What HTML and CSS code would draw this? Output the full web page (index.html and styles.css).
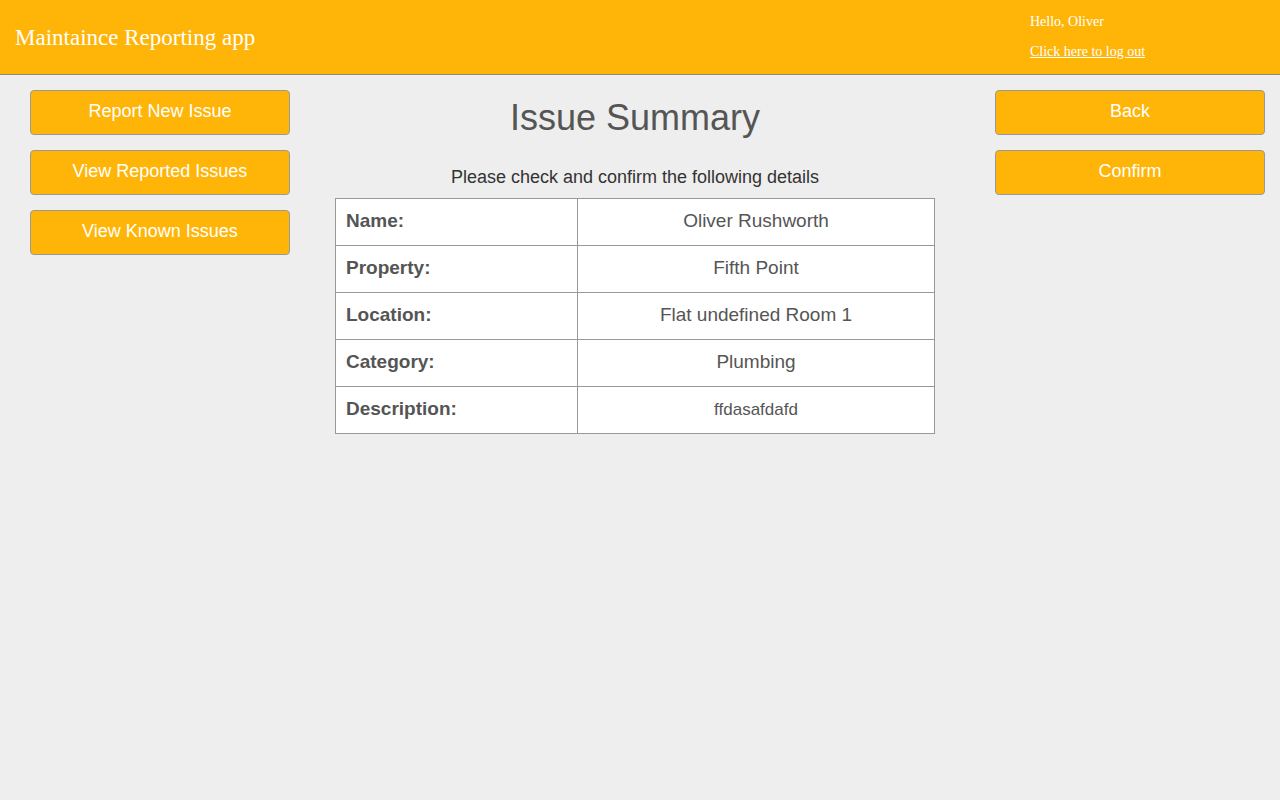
FILE: index.html
```html
<!DOCTYPE html>
<html>
<head>
<meta charset="utf-8">
<title>Maintaince Reporting app</title>
<link rel="stylesheet" href="styles.css">
</head>
<body>
<header class="topbar">
  <div class="app-title">Maintaince Reporting app</div>
  <div class="user-box">
    <div class="hello">Hello, Oliver</div>
    <a class="logout" href="#">Click here to log out</a>
  </div>
</header>
<main class="layout">
  <nav class="side-left">
    <button class="btn">Report New Issue</button>
    <button class="btn">View Reported Issues</button>
    <button class="btn">View Known Issues</button>
  </nav>
  <section class="content">
    <h1 class="heading">Issue Summary</h1>
    <p class="subtitle">Please check and confirm the following details</p>
    <table class="summary">
      <tr><th>Name:</th><td>Oliver Rushworth</td></tr>
      <tr><th>Property:</th><td>Fifth Point</td></tr>
      <tr><th>Location:</th><td>Flat undefined Room 1</td></tr>
      <tr><th>Category:</th><td>Plumbing</td></tr>
      <tr><th>Description:</th><td class="desc">ffdasafdafd</td></tr>
    </table>
  </section>
  <nav class="side-right">
    <button class="btn wide">Back</button>
    <button class="btn wide">Confirm</button>
  </nav>
</main>
</body>
</html>
```

FILE: styles.css
```css
html, body {
  margin: 0;
  padding: 0;
  background: #eeeeee;
  min-height: 100%;
}
body {
  font-family: "Liberation Sans", Arial, sans-serif;
}
.topbar {
  height: 74px;
  background: #ffb508;
  border-bottom: 1px solid #8a8a8a;
  display: flex;
  justify-content: space-between;
  font-family: "Liberation Serif", "Times New Roman", serif;
  color: #ffffff;
}
.app-title {
  font-size: 23px;
  padding-left: 15px;
  line-height: 28px;
  margin-top: 24px;
}
.user-box {
  width: 250px;
  font-size: 14px;
  padding-top: 13px;
}
.hello {
  line-height: 18px;
}
.logout {
  display: inline-block;
  margin-top: 12px;
  line-height: 18px;
  color: #ffffff;
  text-decoration: underline;
}
.layout {
  display: grid;
  grid-template-columns: 320px 630px 1fr;
}
.side-left {
  display: flex;
  flex-direction: column;
  gap: 15px;
  padding: 15px 30px 0 30px;
}
.side-right {
  display: flex;
  flex-direction: column;
  gap: 15px;
  padding: 15px 15px 0 45px;
}
.btn {
  height: 45px;
  width: 260px;
  background: #ffb508;
  border: 1px solid #999999;
  border-radius: 4px;
  color: #ffffff;
  font-family: "Liberation Sans", Arial, sans-serif;
  font-size: 18px;
  padding: 0 0 3px 0;
  cursor: pointer;
}
.btn.wide {
  width: 270px;
}
.content {
  display: flex;
  flex-direction: column;
  align-items: center;
}
.heading {
  font-size: 36px;
  font-weight: normal;
  color: #555555;
  margin: 22px 0 0 0;
  line-height: 42px;
}
.subtitle {
  font-size: 18px;
  color: #333333;
  margin: 27px 0 0 0;
  line-height: 22px;
}
.summary {
  margin-top: 10px;
  width: 600px;
  border-collapse: collapse;
  background: #ffffff;
  color: #555555;
  font-size: 19px;
}
.summary th, .summary td {
  border: 1px solid #999999;
  height: 47px;
  box-sizing: border-box;
  vertical-align: top;
  padding: 11px 10px 0 10px;
  line-height: 22px;
}
.summary th {
  width: 242px;
  text-align: left;
  font-weight: bold;
}
.summary td {
  text-align: center;
}
.summary td.desc {
  font-size: 17px;
  padding-top: 12px;
}
```
